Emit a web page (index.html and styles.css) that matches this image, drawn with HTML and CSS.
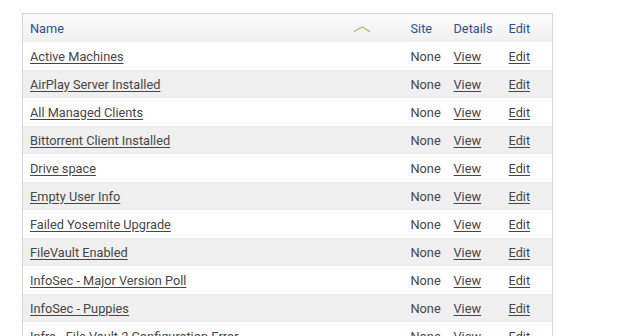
FILE: index.html
```html
<!DOCTYPE html>
<html>
<head>
<meta charset="utf-8">
<link rel="stylesheet" href="styles.css">
</head>
<body>
<div class="wrap">
<table class="grid">
  <colgroup>
    <col class="c-name"><col class="c-site"><col class="c-det"><col class="c-edit">
  </colgroup>
  <thead>
    <tr>
      <th><div class="name-h"><span>Name</span><svg class="sort" width="18" height="6" viewBox="0 0 18 6"><polyline points="1,5.5 9,1 17,5.5" fill="none" stroke="#a9c26a" stroke-width="1.4"/></svg></div></th>
      <th>Site</th>
      <th>Details</th>
      <th>Edit</th>
    </tr>
  </thead>
  <tbody>
    <tr><td><a href="#">Active Machines</a></td><td>None</td><td><a href="#">View</a></td><td><a href="#">Edit</a></td></tr>
    <tr><td><a href="#">AirPlay Server Installed</a></td><td>None</td><td><a href="#">View</a></td><td><a href="#">Edit</a></td></tr>
    <tr><td><a href="#">All Managed Clients</a></td><td>None</td><td><a href="#">View</a></td><td><a href="#">Edit</a></td></tr>
    <tr><td><a href="#">Bittorrent Client Installed</a></td><td>None</td><td><a href="#">View</a></td><td><a href="#">Edit</a></td></tr>
    <tr><td><a href="#">Drive space</a></td><td>None</td><td><a href="#">View</a></td><td><a href="#">Edit</a></td></tr>
    <tr><td><a href="#">Empty User Info</a></td><td>None</td><td><a href="#">View</a></td><td><a href="#">Edit</a></td></tr>
    <tr><td><a href="#">Failed Yosemite Upgrade</a></td><td>None</td><td><a href="#">View</a></td><td><a href="#">Edit</a></td></tr>
    <tr><td><a href="#">FileVault Enabled</a></td><td>None</td><td><a href="#">View</a></td><td><a href="#">Edit</a></td></tr>
    <tr><td><a href="#">InfoSec - Major Version Poll</a></td><td>None</td><td><a href="#">View</a></td><td><a href="#">Edit</a></td></tr>
    <tr><td><a href="#">InfoSec - Puppies</a></td><td>None</td><td><a href="#">View</a></td><td><a href="#">Edit</a></td></tr>
    <tr><td><a href="#">Infra - File Vault 2 Configuration Error</a></td><td>None</td><td><a href="#">View</a></td><td><a href="#">Edit</a></td></tr>
  </tbody>
</table>
</div>
</body>
</html>
```
FILE: styles.css
```css
html, body {
  margin: 0;
  padding: 0;
  background: #fff;
  overflow: hidden;
}
.wrap {
  padding: 13px 0 0 22px;
}
.grid {
  border-collapse: collapse;
  width: 531px;
  table-layout: fixed;
  font-family: Roboto, "Liberation Sans", sans-serif;
  font-size: 12.75px;
  color: #464646;
  border: 1px solid #d6d6d6;
}
.c-name { width: 381px; }
.c-site { width: 43px; }
.c-det { width: 55px; }
.c-edit { width: 51px; }
.grid th {
  height: 28px;
  padding: 0 7px;
  text-align: left;
  font-weight: normal;
  color: #2f4f8f;
  background: linear-gradient(#fbfbfb, #efefef);
}
.name-h {
  display: flex;
  align-items: center;
  justify-content: space-between;
}
.sort {
  margin-right: 26px;
  margin-top: 1px;
}
.grid td {
  height: 28px;
  padding: 0 7px;
  white-space: nowrap;
  overflow: hidden;
}
.grid tbody tr:nth-child(even) td {
  background: #efefef;
}
.grid a {
  color: #464646;
  text-decoration: underline;
  text-underline-offset: 2px;
}
```
